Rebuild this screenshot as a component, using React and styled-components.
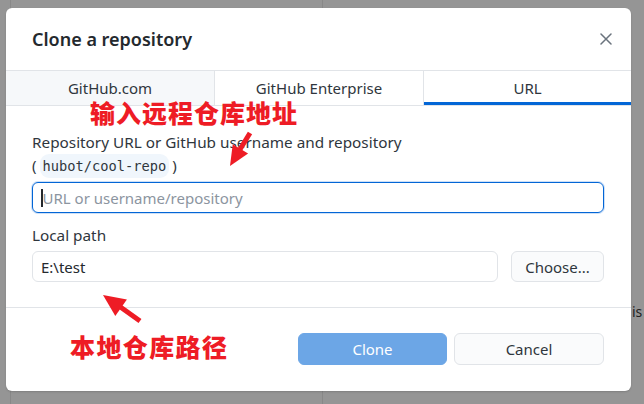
import React from "react";
import styled, { createGlobalStyle } from "styled-components";

const GlobalStyle = createGlobalStyle`
  html, body {
    margin: 0;
    padding: 0;
    background: #959595;
  }
  body {
    font-family: "Noto Sans", "Open Sans", sans-serif;
  }
`;

function App() {
  return (
    <Backdrop>
      <GlobalStyle />
      <BehindText>is</BehindText>
      <Dialog>
        <Header>
          <Title>Clone a repository</Title>
          <CloseButton aria-label="Close">
            <svg width="12" height="12" viewBox="0 0 12 12">
              <path
                d="M1 1 L11 11 M11 1 L1 11"
                stroke="#6a737d"
                strokeWidth="1.5"
                strokeLinecap="round"
              />
            </svg>
          </CloseButton>
        </Header>

        <Tabs>
          <Tab $muted>GitHub.com</Tab>
          <Tab>GitHub Enterprise</Tab>
          <Tab $active>URL</Tab>
        </Tabs>

        <Body>
          <Label>Repository URL or GitHub username and repository</Label>
          <Hint>
            (<Code>hubot/cool-repo</Code>)
          </Hint>
          <TextInput $focused>
            <Caret />
            <Placeholder>URL or username/repository</Placeholder>
          </TextInput>

          <Label $spaced>Local path</Label>
          <PathRow>
            <TextInput $grow>E:\test</TextInput>
            <Button $width="93px">Choose...</Button>
          </PathRow>
        </Body>

        <Footer>
          <Button $primary $width="149px">
            Clone
          </Button>
          <Button $width="150px">Cancel</Button>
        </Footer>

        {/* red annotations drawn over the dialog */}
        <Note $top="92px" $left="84px">输入远程仓库地址</Note>
        <Arrow $top="122px" $left="218px" width="32" height="40" viewBox="0 0 32 40">
          <path d="M26 3 L15 21" stroke="#ee1c25" strokeWidth="5" />
          <path d="M6 36 L8.7 14.2 L24.1 23.6 Z" fill="#ee1c25" />
        </Arrow>

        <Note $top="326px" $left="64px" $spacing="1.4px">本地仓库路径</Note>
        <Arrow $top="282px" $left="92px" width="46" height="36" viewBox="0 0 46 36">
          <path d="M42 31 L21 16" stroke="#ee1c25" strokeWidth="5" />
          <path d="M5 5 L28.9 9.5 L17.3 25.9 Z" fill="#ee1c25" />
        </Arrow>
      </Dialog>
    </Backdrop>
  );
}

const Backdrop = styled.div`
  position: relative;
  width: 644px;
  height: 404px;
  box-sizing: border-box;
  padding: 8px 13px 13px 6px;
  background-color: #959595;
  background-image: linear-gradient(#888888, #888888),
    linear-gradient(#888888, #888888);
  background-size: 1px 100%, 1px 100%;
  background-position: 10px 0, 322px 0;
  background-repeat: no-repeat;
  overflow: hidden;
`;

const BehindText = styled.span`
  position: absolute;
  top: 302px;
  left: 632px;
  font-size: 14px;
  color: #222;
`;

const Dialog = styled.div`
  position: relative;
  width: 625px;
  height: 383px;
  background: #ffffff;
  border-radius: 6px;
  display: flex;
  flex-direction: column;
  color: #24292e;
  box-shadow: 0 1px 2px rgba(0, 0, 0, 0.15);
`;

const Header = styled.div`
  height: 62px;
  display: flex;
  align-items: center;
  justify-content: space-between;
  padding: 0 19px 0 26px;
`;

const Title = styled.h1`
  margin: 0;
  font-size: 18px;
  font-weight: 600;
  color: #24292e;
`;

const CloseButton = styled.button`
  border: none;
  background: none;
  padding: 0;
  width: 12px;
  height: 12px;
  display: flex;
`;

const Tabs = styled.div`
  display: grid;
  grid-template-columns: 208px 209px 208px;
  height: 36px;
  box-sizing: border-box;
  border-top: 1px solid #e1e4e8;
  border-bottom: 1px solid #e1e4e8;
`;

const Tab = styled.div`
  display: flex;
  align-items: center;
  justify-content: center;
  font-size: 15px;
  line-height: 17px;
  color: #2f363d;
  background: ${(p) => (p.$muted ? "#f6f8fa" : "#ffffff")};
  border-left: ${(p) => (p.$muted ? "none" : "1px solid #e1e4e8")};
  box-shadow: ${(p) => (p.$active ? "inset 0 -3px 0 #0366d6" : "none")};
`;

const Body = styled.div`
  display: flex;
  flex-direction: column;
  padding: 26px 27px 25px 26px;
  border-bottom: 1px solid #e1e4e8;
`;

const Label = styled.div`
  font-size: 15.3px;
  line-height: 20px;
  color: #2f363d;
  margin-top: ${(p) => (p.$spaced ? "12px" : "0")};
  margin-bottom: ${(p) => (p.$spaced ? "6px" : "0")};
`;

const Hint = styled.div`
  font-size: 15px;
  line-height: 24px;
  color: #2f363d;
  margin: 1px 0 4px;
`;

const Code = styled.code`
  font-family: "DejaVu Sans Mono", "Liberation Mono", monospace;
  font-size: 13.7px;
  background: #f0f6fc;
  border-radius: 9px;
  margin: 0 3px;
  padding: 4px 3px;
`;

const TextInput = styled.div`
  flex: ${(p) => (p.$grow ? "1" : "none")};
  height: 31px;
  box-sizing: border-box;
  display: flex;
  align-items: center;
  padding: 0 8px;
  font-size: 15px;
  color: #24292e;
  border: 1px solid ${(p) => (p.$focused ? "#0366d6" : "#e1e4e8")};
  border-radius: 6px;
  box-shadow: ${(p) => (p.$focused ? "0 0 0 1px rgba(3,102,214,0.2)" : "none")};
`;

const Caret = styled.span`
  width: 1.5px;
  height: 18px;
  background: #24292e;
`;

const Placeholder = styled.span`
  color: #8c959f;
`;

const PathRow = styled.div`
  display: flex;
  gap: 13px;
`;

const Button = styled.button`
  width: ${(p) => p.$width};
  height: 31px;
  box-sizing: border-box;
  font-family: inherit;
  font-size: 15px;
  border-radius: 6px;
  border: 1px solid ${(p) => (p.$primary ? "#6ca6e6" : "#e1e4e8")};
  background: ${(p) => (p.$primary ? "#6ca6e6" : "#fafbfc")};
  color: ${(p) => (p.$primary ? "#ffffff" : "#2f363d")};
  padding: 0;
`;

const Footer = styled.div`
  display: flex;
  justify-content: flex-end;
  gap: 7px;
  padding: 25px 27px 0 26px;

  ${Button} {
    height: 32px;
  }
`;

const Note = styled.div`
  position: absolute;
  top: ${(p) => p.$top};
  left: ${(p) => p.$left};
  font-family: "Noto Sans CJK SC", sans-serif;
  font-size: 25px;
  font-weight: 900;
  color: #ee1c25;
  letter-spacing: ${(p) => p.$spacing || "1px"};
  line-height: 25px;
`;

const Arrow = styled.svg`
  position: absolute;
  top: ${(p) => p.$top};
  left: ${(p) => p.$left};
`;

export default App;
